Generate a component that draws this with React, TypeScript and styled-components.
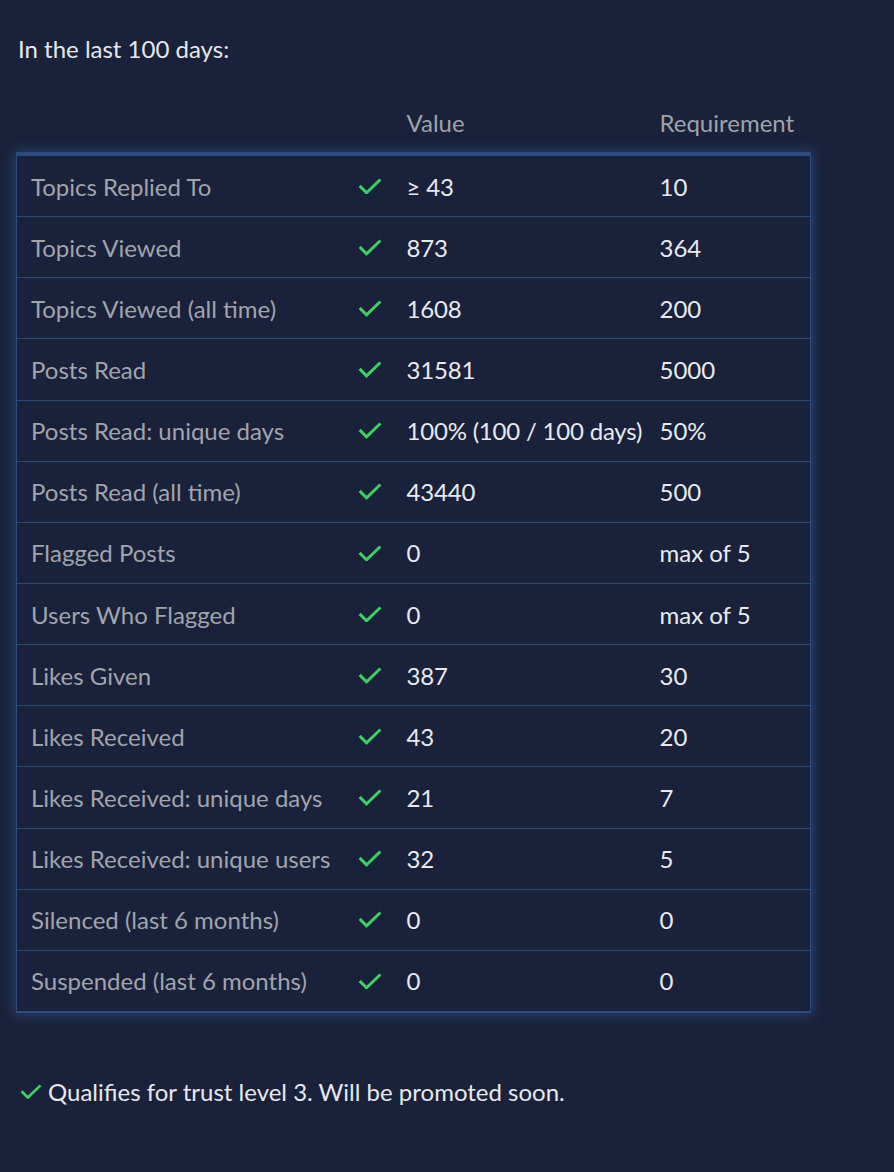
import React from "react";
import styled, { createGlobalStyle } from "styled-components";

const GlobalStyle = createGlobalStyle`
  html, body {
    margin: 0;
    background: #19223a;
  }
  body {
    font-family: "Lato", "Noto Sans", sans-serif;
    color: #e6e8ec;
  }
`;

const Page = styled.main`
  width: 894px;
  min-height: 1172px;
  padding: 30px 0 0 18px;
  box-sizing: border-box;
`;

const Intro = styled.p`
  margin: 0;
  font-size: 24px;
  line-height: 38px;
`;

const Table = styled.table`
  margin: 24px 0 0 -2px;
  width: 794px;
  table-layout: fixed;
  border-collapse: collapse;
  font-size: 24px;
`;

const HeadCell = styled.th`
  height: 60px;
  padding: 0 13px;
  text-align: left;
  font-weight: normal;
  color: #9ea3ab;
  vertical-align: middle;
`;

const Body = styled.tbody`
  box-shadow: 0 0 12px 2px rgba(58, 96, 168, 0.55);
  border-top: 4px solid #2e4b7e;
`;

const Row = styled.tr`
  border-bottom: 1px solid #2d4877;
  &:last-child {
    border-bottom: 2px solid #2e4b7e;
  }
`;

const Cell = styled.td<{ $muted?: boolean; $pad?: number }>`
  height: 60.15px;
  padding: 0 0 0 ${(p) => p.$pad ?? 13}px;
  color: ${(p) => (p.$muted ? "#a0a4ac" : "#e8eaee")};
  white-space: nowrap;
  vertical-align: middle;
  &:first-child {
    border-left: 1px solid #2e4b7e;
  }
  &:last-child {
    border-right: 1px solid #2e4b7e;
  }
`;

const ValueText = styled.span`
  letter-spacing: -0.2px;
`;

const CheckCell = styled.td`
  padding: 0;
  text-align: center;
  vertical-align: middle;
  svg {
    display: block;
    margin: 0 auto;
  }
`;

const Footer = styled.p`
  display: flex;
  align-items: center;
  gap: 6px;
  margin: 64px 0 0 2px;
  font-size: 24px;
`;

const Check = ({ w = 24 }: { w?: number }) => (
  <svg width={w} height={w * 0.7} viewBox="0 0 24 17" fill="none">
    <polyline
      points="1.5,8 8.5,15 22.5,1.5"
      stroke="#3ecf63"
      strokeWidth="3"
      strokeLinecap="butt"
      strokeLinejoin="miter"
    />
  </svg>
);

const rows: [string, string, string][] = [
  ["Topics Replied To", "≥ 43", "10"],
  ["Topics Viewed", "873", "364"],
  ["Topics Viewed (all time)", "1608", "200"],
  ["Posts Read", "31581", "5000"],
  ["Posts Read: unique days", "100% (100 / 100 days)", "50%"],
  ["Posts Read (all time)", "43440", "500"],
  ["Flagged Posts", "0", "max of 5"],
  ["Users Who Flagged", "0", "max of 5"],
  ["Likes Given", "387", "30"],
  ["Likes Received", "43", "20"],
  ["Likes Received: unique days", "21", "7"],
  ["Likes Received: unique users", "32", "5"],
  ["Silenced (last 6 months)", "0", "0"],
  ["Suspended (last 6 months)", "0", "0"],
];

export default function App() {
  return (
    <Page>
      <GlobalStyle />
      <Intro>In the last 100 days:</Intro>
      <Table>
        <colgroup>
          <col style={{ width: 329 }} />
          <col style={{ width: 48 }} />
          <col style={{ width: 253 }} />
          <col style={{ width: 164 }} />
        </colgroup>
        <thead>
          <tr>
            <HeadCell />
            <HeadCell />
            <HeadCell>Value</HeadCell>
            <HeadCell>Requirement</HeadCell>
          </tr>
        </thead>
        <Body>
          {rows.map(([label, value, req]) => (
            <Row key={label}>
              <Cell $muted $pad={14}>
                {label}
              </Cell>
              <CheckCell>
                <Check />
              </CheckCell>
              <Cell>
                <ValueText>{value}</ValueText>
              </Cell>
              <Cell>{req}</Cell>
            </Row>
          ))}
        </Body>
      </Table>
      <Footer>
        <Check w={22} />
        Qualifies for trust level 3. Will be promoted soon.
      </Footer>
    </Page>
  );
}
